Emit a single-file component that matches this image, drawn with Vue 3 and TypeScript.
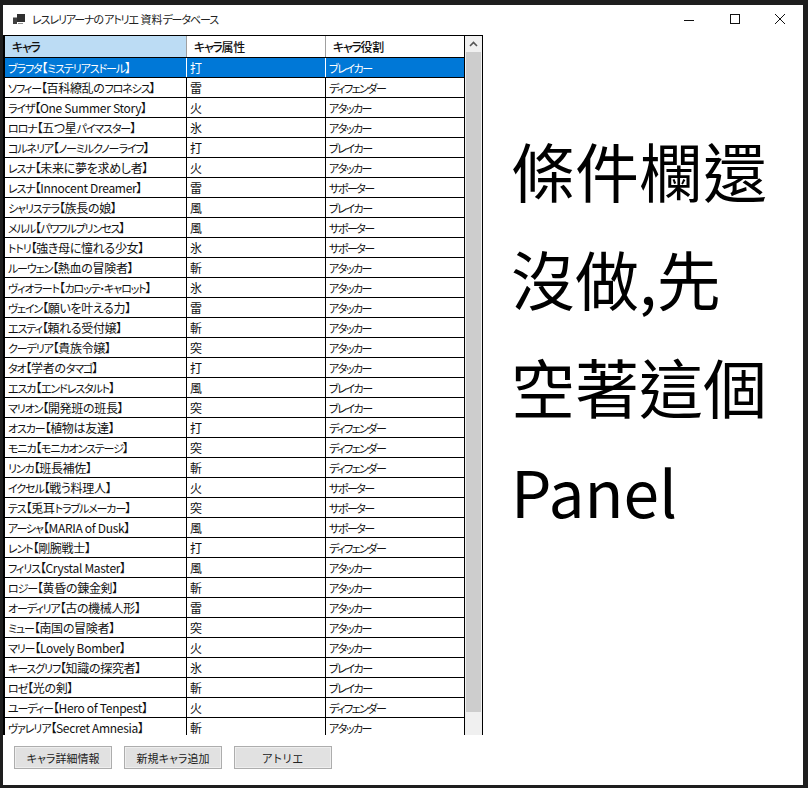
<script setup lang="ts">
interface Chara { name: string; attr: string; role: string }
interface Seg { text: string; cls: string }
const raw = `ブラフタ【ミステリアスドール】,打,ブレイカー
ソフィー【百科繚乱のフロネシス】,雷,ディフェンダー
ライザ【One Summer Story】,火,アタッカー
ロロナ【五つ星パイマスター】,氷,アタッカー
コルネリア【ノーミルクノーライフ】,打,ブレイカー
レスナ【未来に夢を求めし者】,火,アタッカー
レスナ【Innocent Dreamer】,雷,サポーター
シャリステラ【族長の娘】,風,ブレイカー
メルル【パワフルプリンセス】,風,サポーター
トトリ【強き母に憧れる少女】,氷,サポーター
ルーウェン【熱血の冒険者】,斬,アタッカー
ヴィオラート【カロッテ・キャロット】,氷,アタッカー
ヴェイン【願いを叶える力】,雷,アタッカー
エスティ【頼れる受付嬢】,斬,アタッカー
クーデリア【貴族令嬢】,突,アタッカー
タオ【学者のタマゴ】,打,アタッカー
エスカ【エンドレスタルト】,風,ブレイカー
マリオン【開発班の班長】,突,ブレイカー
オスカー【植物は友達】,打,ディフェンダー
モニカ【モニカオンステージ】,突,ディフェンダー
リンカ【班長補佐】,斬,ディフェンダー
イクセル【戦う料理人】,火,サポーター
テス【兎耳トラブルメーカー】,突,サポーター
アーシャ【MARIA of Dusk】,風,サポーター
レント【剛腕戦士】,打,ディフェンダー
フィリス【Crystal Master】,風,アタッカー
ロジー【黄昏の錬金剣】,斬,アタッカー
オーディリア【古の機械人形】,雷,アタッカー
ミュー【南国の冒険者】,突,アタッカー
マリー【Lovely Bomber】,火,アタッカー
キースグリフ【知識の探究者】,氷,ブレイカー
ロゼ【光の剣】,斬,ブレイカー
ユーディー【Hero of Tenpest】,火,ディフェンダー
ヴァレリア【Secret Amnesia】,斬,アタッカー`
const rows: Chara[] = raw.split('\n').map((l) => {
  const [name, attr, role] = l.split(',')
  return { name, attr, role }
})
const buttons = ['キャラ詳細情報', '新規キャラ追加', 'アトリエ']
const notes = ['條件欄還', '沒做,先', '空著這個', 'Panel']
// The reference font sets katakana narrower than kanji, so each run gets its own tracking.
function segs(text: string): Seg[] {
  return (text.match(/[\u30a0-\u30ff]+|[【】]+|[^\u30a0-\u30ff【】]+/g) ?? []).map((t) => ({
    text: t,
    cls: /^[\u30a0-\u30ff]/.test(t) ? 'kana' : /^[【】]/.test(t) ? 'bracket' : '',
  }))
}
</script>

<template>
  <div class="window">
    <header class="titlebar">
      <svg class="app-icon" width="12" height="10" viewBox="0 0 12 10">
        <rect x="0" y="3.5" width="4" height="6.5" fill="#404040" />
        <rect x="4" y="0" width="8" height="8" fill="#303030" />
        <rect x="5" y="9" width="5" height="1" fill="#909090" />
      </svg>
      <span class="title"><span v-for="(s, i) in segs('レスレリアーナのアトリエ 資料データベース')" :key="i" :class="s.cls">{{ s.text }}</span></span>
      <div class="controls">
        <svg width="12" height="12" viewBox="0 0 12 12"><path d="M1 7.5H11" stroke="#111" stroke-width="1" /></svg>
        <svg width="12" height="12" viewBox="0 0 12 12"><rect x="1.5" y="1.5" width="9" height="9" fill="none" stroke="#111" stroke-width="1" /></svg>
        <svg width="12" height="12" viewBox="0 0 12 12"><path d="M1 1L11 11M11 1L1 11" stroke="#111" stroke-width="1" /></svg>
      </div>
    </header>

    <div class="content">
      <div class="grid">
        <div class="table">
          <div class="row head">
            <div v-for="(h, hi) in ['キャラ', 'キャラ属性', 'キャラ役割']" :key="h" class="cell" :class="{ first: hi === 0 }">
              <span v-for="(s, i) in segs(h)" :key="i" :class="s.cls">{{ s.text }}</span>
            </div>
          </div>
          <div v-for="(r, ri) in rows" :key="r.name" class="row" :class="{ selected: ri === 0 }">
            <div class="cell"><span v-for="(s, i) in segs(r.name)" :key="i" :class="s.cls">{{ s.text }}</span></div>
            <div class="cell">{{ r.attr }}</div>
            <div class="cell"><span class="role">{{ r.role }}</span></div>
          </div>
        </div>
        <div class="scrollbar">
          <div class="arrow">
            <svg width="9" height="6" viewBox="0 0 9 6"><path d="M1 5L4.5 1.5L8 5" fill="none" stroke="#555" stroke-width="1.6" /></svg>
          </div>
          <div class="thumb"></div>
        </div>
      </div>
      <div class="panel">
        <p v-for="n in notes" :key="n">{{ n }}</p>
      </div>
    </div>

    <footer class="actions">
      <button v-for="b in buttons" :key="b" type="button">{{ b }}</button>
    </footer>
  </div>
</template>

<style scoped>
.window {
  margin: 5px 0 0 3px;
  width: 800px;
  height: 780px;
  background: #fff;
  display: flex;
  flex-direction: column;
  font-family: "Noto Sans CJK JP", "Liberation Sans", sans-serif;
  color: #111;
  overflow: hidden;
}
.titlebar {
  height: 30px;
  box-sizing: border-box;
  padding: 0 0 2px 10px;
  flex: none;
  display: flex;
  align-items: center;
}
.app-icon { flex: none; }
.title {
  margin-left: 7px;
  font-size: 11px;
  font-feature-settings: "palt";
  color: #222;
}
.title .kana { letter-spacing: -1.1px; }
.controls {
  margin-left: auto;
  display: flex;
  gap: 33.5px;
  padding-right: 17px;
}
.content {
  height: 700px;
  flex: none;
  display: flex;
}
.grid {
  flex: none;
  display: flex;
  height: 700px;
  overflow: hidden;
  border-top: 1px solid #000;
  border-left: 2px solid #000;
  border-right: 1px solid #000;
  box-sizing: border-box;
  width: 480px;
}
.table {
  width: 460px;
  box-sizing: border-box;
  flex: none;
  border-right: 1px solid #000;
}
.row {
  display: grid;
  grid-template-columns: 182px 139px 138px;
  height: 20px;
  box-sizing: border-box;
  border-bottom: 1px solid #000;
  font-size: 12px;
  line-height: 19px;
  font-feature-settings: "palt";
  letter-spacing: -0.3px;
}
.row .kana { font-size: 11px; letter-spacing: -1.1px; }
.row .bracket { letter-spacing: -0.5px; }
.row .role { font-size: 11px; letter-spacing: -1.5px; }
.cell {
  padding-left: 3px;
  border-right: 1px solid #000;
  white-space: nowrap;
  overflow: hidden;
}
.cell:last-child { border-right: none; }
.head {
  height: 22px;
  line-height: 21px;
  font-weight: 500;
}
.head .kana { font-size: 12px; letter-spacing: -1.3px; }
.head .cell {
  padding-left: 7px;
  border-right: 1px solid #a0a0a0;
}
.head .cell:last-child { border-right: none; }
.head .first { background: #bcdcf4; }
.selected {
  background: #0078d7;
  color: #fff;
}
.selected .cell { border-right-color: #fff; }
.selected .cell:last-child { border-right: none; }
.scrollbar {
  width: 17px;
  flex: none;
  background: #f0f0f0;
  display: flex;
  flex-direction: column;
}
.arrow {
  height: 16px;
  display: flex;
  align-items: center;
  justify-content: center;
}
.thumb {
  margin: 0 1px;
  width: 15px;
  height: 660px;
  background: #cdcdcd;
}
.panel {
  margin-left: 28px;
  padding-top: 80px;
  font-family: "Noto Sans CJK TC", "Liberation Sans", sans-serif;
  font-size: 64px;
  color: #000;
}
.panel p {
  margin: 0;
  height: 108px;
  line-height: 108px;
  white-space: nowrap;
}
.panel p:last-child { line-height: 102px; }
.actions {
  display: flex;
  gap: 12px;
  padding: 11px 0 0 11px;
}
button {
  width: 98px;
  height: 23px;
  padding: 0;
  background: #e1e1e1;
  border: 1px solid #adadad;
  box-shadow: inset 0 0 0 1px #eee;
  font-family: inherit;
  font-size: 11px;
  font-feature-settings: "palt";
  color: #222;
}
button:last-child { letter-spacing: 0.8px; }
</style>

<style>
html, body {
  margin: 0;
  background: #1e1e1e;
  overflow: hidden;
}
</style>
